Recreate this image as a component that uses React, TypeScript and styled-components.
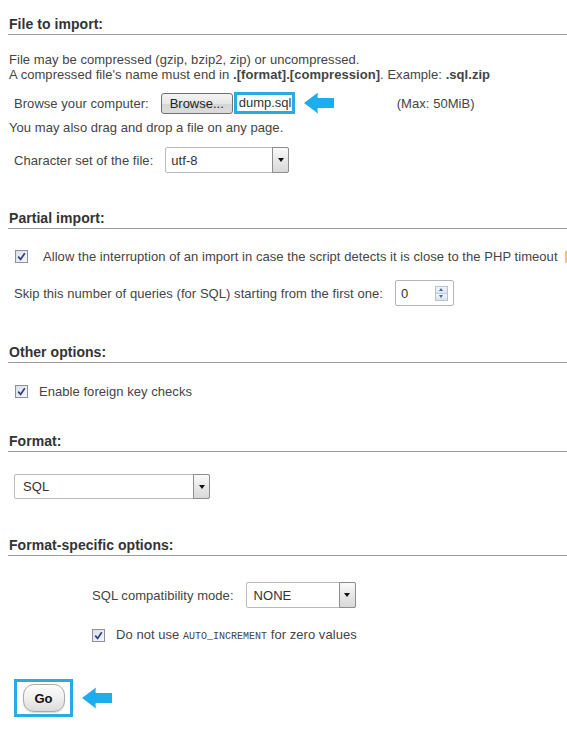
import React from 'react'
import styled, { createGlobalStyle } from 'styled-components';

const GlobalStyle = createGlobalStyle`
html, body {
  margin: 0;
  padding: 0;
  background: #fff;
  overflow: hidden;
}
body {
  font-family: "Liberation Sans", Arial, sans-serif;
  font-size: 13px;
  letter-spacing: .05px;
  color: #444;
}
`

const Page = styled.div`
width: 567px;
padding-left: 8px;
box-sizing: border-box;
overflow: hidden;
`

const Legend = styled.h2<{ $gap: number }>`
margin: ${({ $gap }) => $gap}px 0 0;
padding: 0 0 2px 1px;
font-size: 14px;
line-height: 16px;
font-weight: bold;
color: #333;
border-bottom: 1px solid #9c9c9c;
`

const Note = styled.p<{ $gap: number }>`
margin: ${({ $gap }) => $gap}px 0 0 1px;
line-height: 15px;
`

const Row = styled.div<{ $gap: number; $indent?: number }>`
display: flex;
align-items: center;
margin-top: ${({ $gap }) => $gap}px;
padding-left: ${({ $indent }) => $indent ?? 6}px;
white-space: nowrap;
`

const Label = styled.span`
line-height: 15px;
`

const BrowseButton = styled.button`
margin-left: 12px;
width: 72px;
height: 21px;
padding: 0;
font: 13px "Liberation Sans", Arial, sans-serif;
color: #222;
border: 1px solid #707070;
border-radius: 3px;
background: linear-gradient(#f4f4f4, #e6e6e6 50%, #d6d6d6 51%, #dcdcdc);
`

const Highlight = styled.div`
box-sizing: border-box;
border: 3px solid #29abe2;
background: #fff;
`

const FileName = styled(Highlight)`
margin-left: 1px;
width: 61px;
height: 22px;
padding-left: 2px;
line-height: 16px;
letter-spacing: 0;
color: #333;
`

const Arrow = styled.svg`
margin-left: 9px;
flex-shrink: 0;
`

const Max = styled.span`
margin-left: 63px;
`

const Select = styled.div<{ $width: number; $height: number; $pad: number; $offset?: number }>`
box-sizing: border-box;
display: flex;
align-items: stretch;
margin-left: ${({ $offset }) => $offset ?? 12}px;
width: ${({ $width }) => $width}px;
height: ${({ $height }) => $height}px;
padding-left: ${({ $pad }) => $pad}px;
border: 1px solid #b9b9b9;
border-radius: 2px;
background: #fff;
color: #333;
`

const SelectValue = styled.span`
flex: 1;
align-self: center;
`

const DropButton = styled.span`
box-sizing: border-box;
width: 17px;
display: flex;
align-items: center;
justify-content: center;
border: 1px solid #8d8d8d;
margin: -1px -1px -1px 0;
border-radius: 0 2px 2px 0;
background: linear-gradient(#fafafa, #e8e8e8 50%, #d9d9d9);

&::after {
  content: '';
  border-left: 3.5px solid transparent;
  border-right: 3.5px solid transparent;
  border-top: 4px solid #111;
}
`

const CheckBox = styled.span`
box-sizing: border-box;
display: inline-flex;
align-items: center;
justify-content: center;
width: 13px;
height: 13px;
margin-left: 1px;
border: 1px solid #8e8f9f;
background: linear-gradient(135deg, #dcdfe8, #f6f7fa);
flex-shrink: 0;
`

const CheckText = styled.span<{ $gap: number }>`
margin-left: ${({ $gap }) => $gap}px;
line-height: 15px;
`

const EdgeMark = styled.span`
margin-left: auto;
width: 2px;
height: 12px;
background: #f0c862;
flex-shrink: 0;
`

const Code = styled.code`
font-family: "Liberation Mono", "Courier New", monospace;
font-size: 10px;
letter-spacing: 0;
`

const NumberBox = styled.div`
box-sizing: border-box;
display: flex;
align-items: center;
justify-content: space-between;
margin-left: 12px;
width: 59px;
height: 26px;
padding: 0 5px 0 5px;
border: 1px solid #b5b5b5;
border-radius: 2px;
color: #333;
`

const Spinner = styled.div`
display: flex;
flex-direction: column;
width: 13px;
height: 15px;
border: 1px solid #b7c2d3;
box-sizing: border-box;
`

const SpinHalf = styled.span<{ $down?: boolean }>`
flex: 1;
display: flex;
align-items: center;
justify-content: center;
background: linear-gradient(#f3f6fa, #dbe3ee);
border-top: ${({ $down }) => ($down ? '1px solid #c3ccd9' : 'none')};

&::after {
  content: '';
  border-left: 2.5px solid transparent;
  border-right: 2.5px solid transparent;
  ${({ $down }) => ($down ? 'border-top' : 'border-bottom')}: 3px solid #4d6b99;
}
`

const GoFrame = styled(Highlight)`
display: flex;
align-items: center;
justify-content: center;
width: 59px;
height: 38px;
`

const GoButton = styled.button`
width: 42px;
height: 28px;
padding: 0;
font: bold 13px "Liberation Sans", Arial, sans-serif;
color: #111;
border: 1px solid #a9a9a9;
border-radius: 11px;
background: linear-gradient(#fdfdfd, #efefef 50%, #dcdcdc);
box-shadow: 0 1px 1px rgba(0, 0, 0, .15);
`

const Check = () => (
    <CheckBox>
        <svg width="9" height="9" viewBox="0 0 9 9">
            <path d="M1.2 4.6 L3.6 7.4 L7.8 1.2" fill="none" stroke="#2c3f87" strokeWidth="1.7" />
        </svg>
    </CheckBox>
)

const BlueArrow = ({ w = 30, h = 22 }: { w?: number; h?: number }) => (
    <Arrow width={w} height={h} viewBox="0 0 30 22">
        <path d="M0 11 L14 0.5 Q13 5.5 14 6 L30 6 L30 16 L14 16 Q13 16.5 14 21.5 Z" fill="#1badee" />
    </Arrow>
)

const App = () => (
    <Page>
        <GlobalStyle />

        <Legend $gap={16}>File to import:</Legend>
        <Note $gap={17}>
            File may be compressed (gzip, bzip2, zip) or uncompressed.<br />
            A compressed file's name must end in <b>.[format].[compression]</b>. Example: <b>.sql.zip</b>
        </Note>
        <Row $gap={10}>
            <Label>Browse your computer:</Label>
            <BrowseButton>Browse...</BrowseButton>
            <FileName>dump.sql</FileName>
            <BlueArrow />
            <Max>(Max: 50MiB)</Max>
        </Row>
        <Note $gap={6}>You may also drag and drop a file on any page.</Note>
        <Row $gap={12}>
            <Label>Character set of the file:</Label>
            <Select $width={124} $height={26} $pad={5}>
                <SelectValue>utf-8</SelectValue>
                <DropButton />
            </Select>
        </Row>

        <Legend $gap={37}>Partial import:</Legend>
        <Row $gap={20}>
            <Check />
            <CheckText $gap={15}>
                Allow the interruption of an import in case the script detects it is close to the PHP timeout
            </CheckText>
            <EdgeMark />
        </Row>
        <Row $gap={16}>
            <Label>Skip this number of queries (for SQL) starting from the first one:</Label>
            <NumberBox>
                0
                <Spinner>
                    <SpinHalf />
                    <SpinHalf $down />
                </Spinner>
            </NumberBox>
        </Row>

        <Legend $gap={38}>Other options:</Legend>
        <Row $gap={21}>
            <Check />
            <CheckText $gap={11}>Enable foreign key checks</CheckText>
        </Row>

        <Legend $gap={34}>Format:</Legend>
        <Row $gap={22}>
            <Select $width={196} $height={25} $pad={8} $offset={0}>
                <SelectValue>SQL</SelectValue>
                <DropButton />
            </Select>
        </Row>

        <Legend $gap={38}>Format-specific options:</Legend>
        <Row $gap={26} $indent={84}>
            <Label>SQL compatibility mode:</Label>
            <Select $width={110} $height={26} $pad={7}>
                <SelectValue>NONE</SelectValue>
                <DropButton />
            </Select>
        </Row>
        <Row $gap={19} $indent={83}>
            <Check />
            <CheckText $gap={11}>Do not use <Code>AUTO_INCREMENT</Code> for zero values</CheckText>
        </Row>

        <Row $gap={35}>
            <GoFrame>
                <GoButton>Go</GoButton>
            </GoFrame>
            <BlueArrow h={24} />
        </Row>
    </Page>
)

export default App;
